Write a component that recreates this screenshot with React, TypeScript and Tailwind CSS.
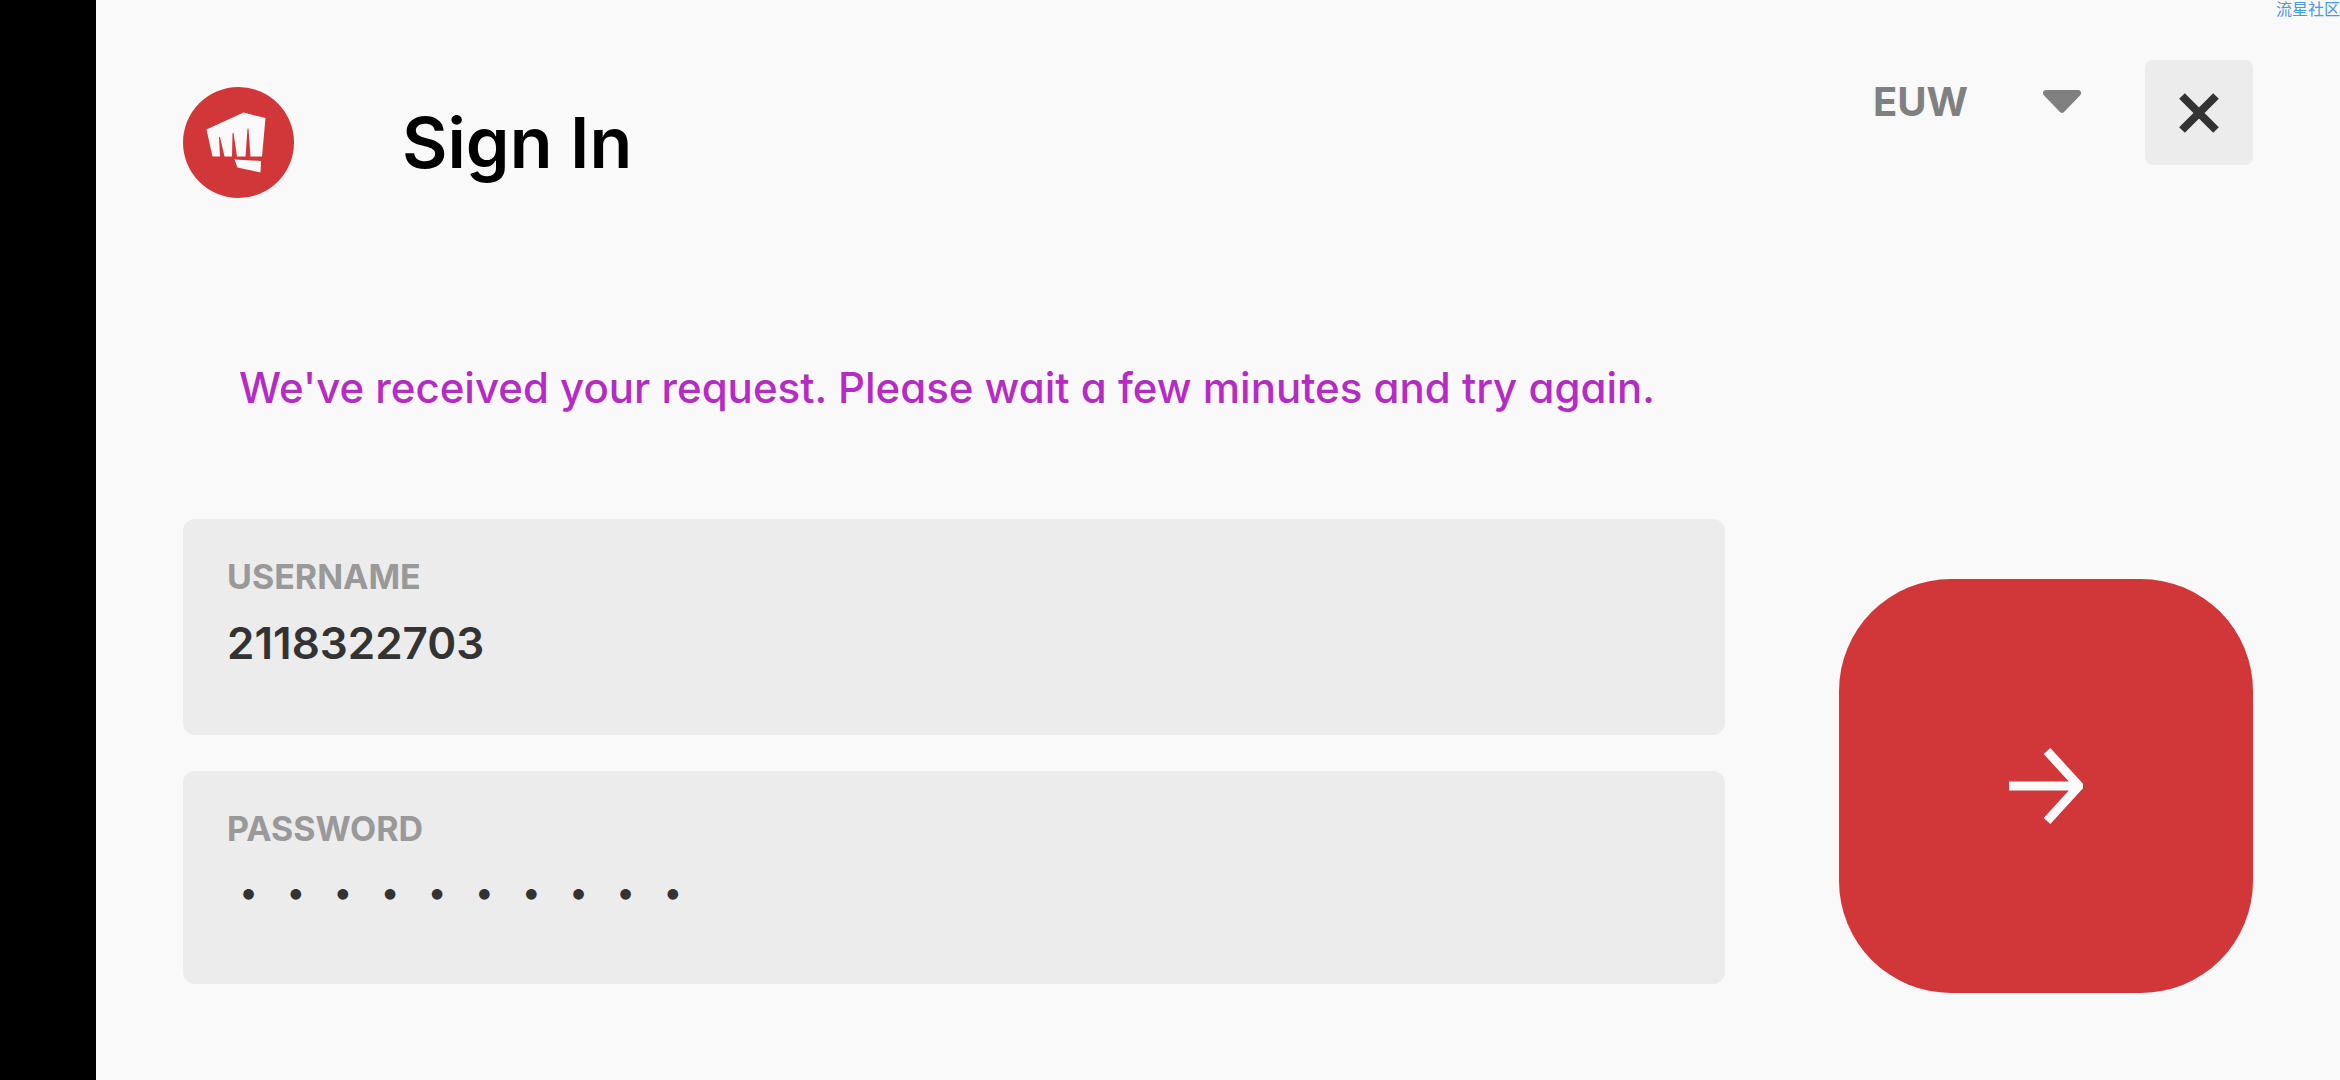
import { useState } from 'react';

const regions = ['EUW', 'EUNE', 'NA', 'BR', 'TR'];

function Logo() {
  return (
    <svg viewBox="0 0 111 111" className="size-[111px] shrink-0" role="img" aria-label="Logo">
      <circle cx="55.5" cy="55.5" r="55.5" fill="#d13639" />
      <path
        fill="#fafafa"
        d="M23.500 42.500 60.500 25.500 82.500 31 79 69.500H67.500L65.500 41.500H64.500L62.500 69.500H54L50.500 46H49.500L49 69.500H41.500L37 50H36L37 69.500H29.500Z"
      />
      <path fill="#fafafa" d="M51.500 72.500 78 74 77.500 85.500 54.500 80.500Z" />
    </svg>
  );
}

function RegionSelect() {
  return (
    <div className="relative w-52 text-[#808080]">
      <select
        aria-label="Region"
        defaultValue="EUW"
        className="h-21 w-full appearance-none bg-transparent text-[40px] font-bold"
      >
        {regions.map((region) => (
          <option key={region} value={region}>
            {region}
          </option>
        ))}
      </select>
      <svg viewBox="0 0 38 23" className="pointer-events-none absolute top-[30px] right-0 w-[38px]">
        <path
          fill="currentColor"
          d="M3 0H35C38 0 39 3.500 37 5.500L22 21C20 23.500 18 23.500 16 21L1 5.500C-1 3.500 0 0 3 0Z"
        />
      </svg>
    </div>
  );
}

export default function App() {
  const [username, setUsername] = useState('2118322703');
  const [password, setPassword] = useState('0123456789');

  return (
    <div className="relative flex min-h-screen overflow-hidden bg-[#f9f9f9] font-['Inter','Noto_Sans_CJK_SC',sans-serif] [font-feature-settings:'cv11']">
      <aside className="w-24 shrink-0 bg-black" />

      <main className="flex-1 px-[87px] py-[60px]">
        <header className="flex items-start justify-between">
          <div className="flex items-center gap-27 pt-[27px]">
            <Logo />
            <h1 className="text-[70px] leading-none font-semibold text-black">Sign In</h1>
          </div>
          <div className="flex items-start gap-16">
            <RegionSelect />
            <button
              type="button"
              aria-label="Close"
              className="flex h-[105px] w-27 items-center justify-center rounded-lg bg-[#ececec]"
            >
              <svg viewBox="0 0 40 40" className="size-10" stroke="#333333" strokeWidth="8">
                <path d="M3 3 37 37M37 3 3 37" />
              </svg>
            </button>
          </div>
        </header>

        <p className="mt-40 pl-14 text-[42px] leading-[60px] font-medium text-[#b52cc4]" role="status">
          We've received your request. Please wait a few minutes and try again.
        </p>

        <form className="mt-[101px] flex items-start gap-[114px]" onSubmit={(e) => e.preventDefault()}>
          <div className="flex flex-1 flex-col gap-9">
            <div className="flex h-54 flex-col rounded-xl bg-[#ececec] px-11 pt-9">
              <label htmlFor="username" className="text-[34px] leading-11 font-bold text-[#999999]">
                USERNAME
              </label>
              <input
                id="username"
                type="text"
                value={username}
                onChange={(e) => setUsername(e.target.value)}
                className="mt-3 h-16 w-full bg-transparent text-[44px] font-semibold text-[#333333] outline-none"
              />
            </div>
            <div className="flex h-[213px] flex-col rounded-xl bg-[#ececec] px-11 pt-9">
              <label htmlFor="password" className="text-[34px] leading-11 font-bold text-[#999999]">
                PASSWORD
              </label>
              <input
                id="password"
                type="password"
                value={password}
                onChange={(e) => setPassword(e.target.value)}
                className="mt-2 h-16 w-full bg-transparent px-3 text-[34px] tracking-[28px] text-[#333333] outline-none"
              />
            </div>
          </div>
          <button
            type="submit"
            aria-label="Sign in"
            className="mt-15 flex size-[414px] shrink-0 items-center justify-center rounded-[112px] bg-[#d13639]"
          >
            <svg viewBox="0 0 74 76" className="h-[76px] w-[74px]" fill="none" stroke="#fafafa" strokeWidth="9">
              <path d="M0 38H68M38 3 70 38 38 73" strokeLinejoin="round" />
            </svg>
          </button>
        </form>
      </main>

      <span className="absolute top-0 right-0 text-base leading-[18px] text-[#4a98e6]">流星社区</span>
    </div>
  );
}
